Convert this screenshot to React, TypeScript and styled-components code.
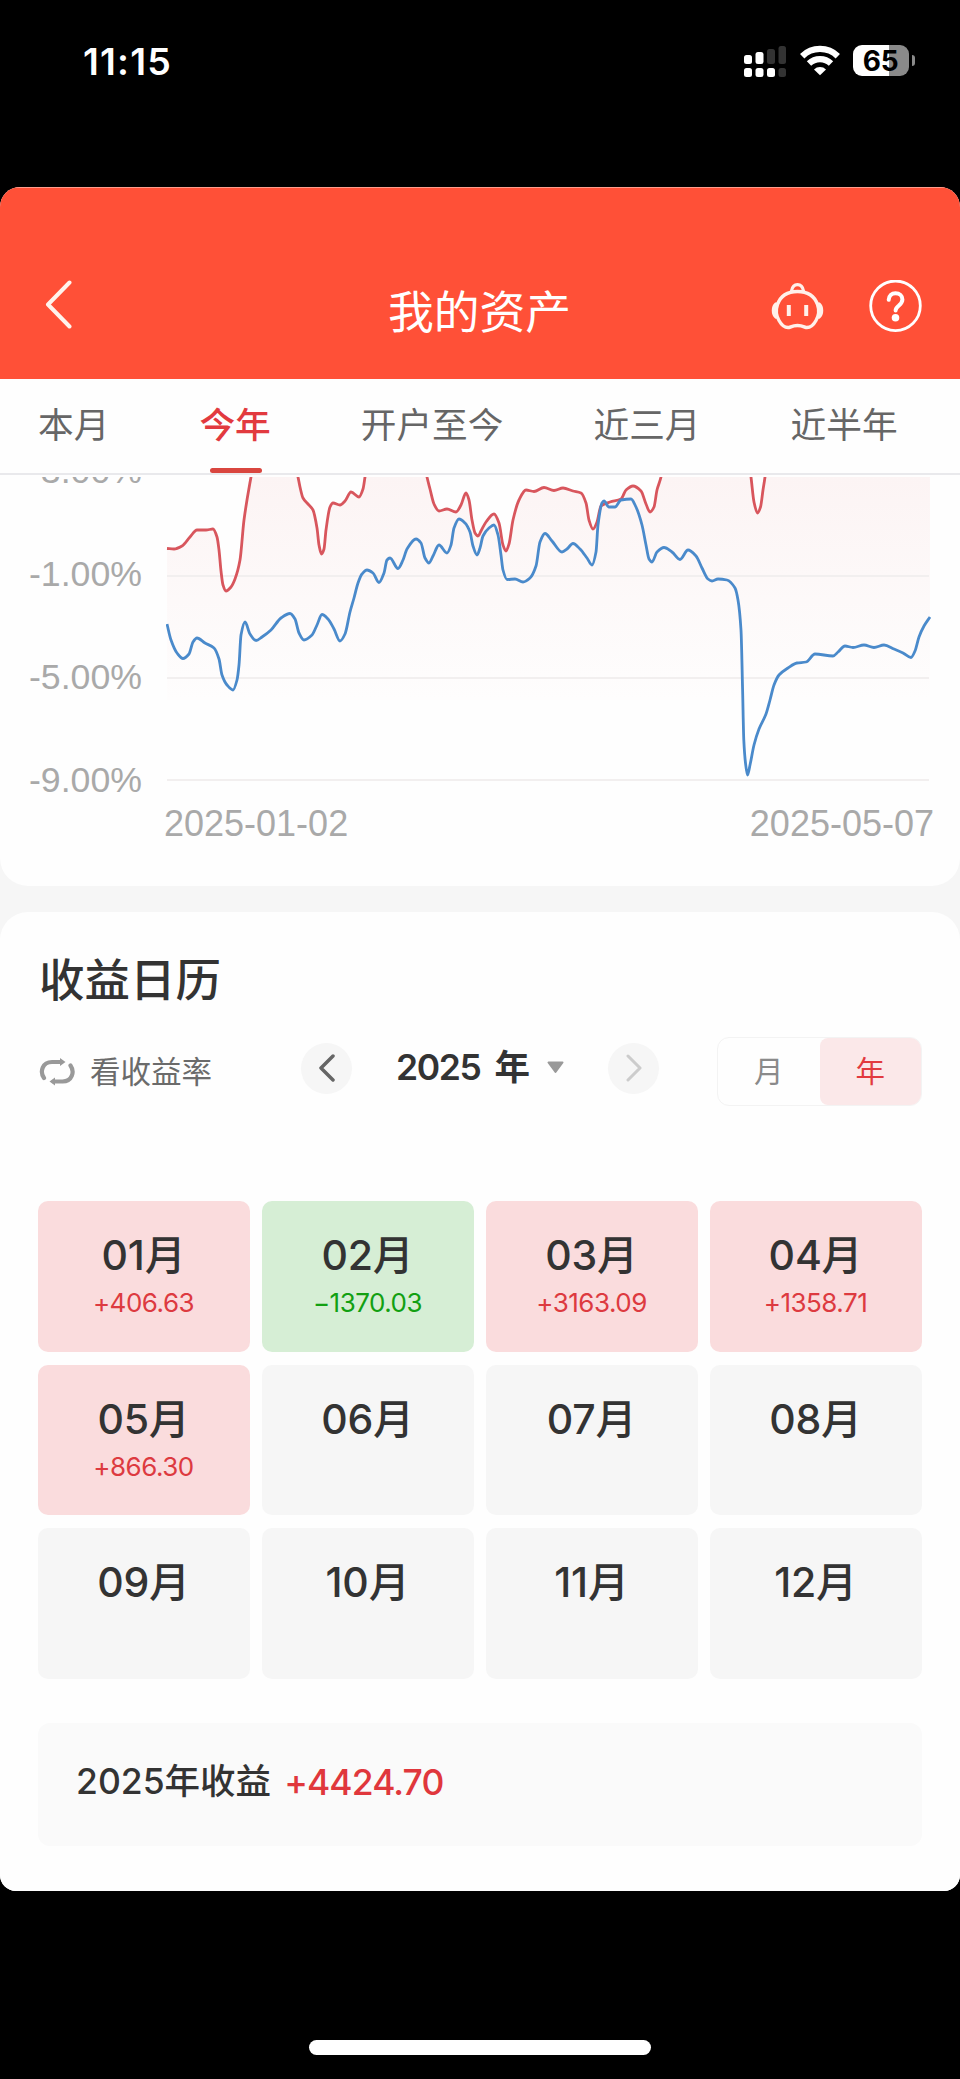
import React from 'react';
import styled, { createGlobalStyle } from 'styled-components';

const GlobalStyle = createGlobalStyle`
  * { box-sizing: border-box; }
  body {
    margin: 0;
    background: #000;
    font-family: Inter, "Noto Sans CJK SC", sans-serif;
    color: #333;
  }
`;

const Screen = styled.div`
  width: 960px;
  height: 2079px;
  display: flex;
  flex-direction: column;
  background: #000;
  overflow: hidden;
`;

const StatusBar = styled.div`
  height: 187px;
  flex: none;
  display: flex;
  justify-content: space-between;
  align-items: flex-start;
  padding: 45px 45px 0 83px;
`;

const Clock = styled.div`
  color: #fff;
  font-size: 37.5px;
  line-height: 33px;
  font-weight: 600;
  letter-spacing: 1.2px;
`;

const StatusIcons = styled.div`
  display: flex;
  align-items: flex-start;
  height: 33px;
`;

const SignalIcon = styled.svg`
  display: block;
  margin-right: 14px;
`;

const WifiIcon = styled.svg`
  display: block;
  margin-right: 13px;
`;

const Battery = styled.div`
  width: 56px;
  height: 31px;
  border-radius: 9px;
  background: linear-gradient(90deg, #fff 0 65%, #8a8a8a 65% 100%);
  color: #000;
  font-size: 28px;
  line-height: 32px;
  font-weight: 700;
  text-align: center;
  letter-spacing: -0.3px;
  padding-right: 1px;
`;

const BatteryTip = styled.div`
  width: 3px;
  height: 11px;
  margin: 10px 0 0 3px;
  border-radius: 0 5px 5px 0;
  background: #8a8a8a;
`;

const AppWindow = styled.div`
  height: 1704px;
  flex: none;
  border-radius: 20px 20px 16px 16px;
  overflow: hidden;
  background: #f6f6f6;
`;

const Header = styled.header`
  height: 192px;
  padding: 92px 38px 0 45px;
  border-top: 1px solid #ff9c8c;
  background: #ff5037;
  display: grid;
  grid-template-columns: 1fr auto 1fr;
  align-items: start;
`;

const Title = styled.h1`
  margin: 10px 8px 0 0;
  font-size: 45.8px;
  line-height: 46px;
  font-weight: 400;
  color: #fff;
`;

const HeaderActions = styled.div`
  display: flex;
  justify-content: flex-end;
  gap: 45px;
`;

const Tabs = styled.nav`
  height: 96px;
  padding-left: 38px;
  display: flex;
  gap: 90px;
  background: #fefefe;
  border-bottom: 2px solid #e9e9ec;
`;

const Tab = styled.div<{ $active?: boolean }>`
  height: 94px;
  display: flex;
  flex-direction: column;
  align-items: center;
  justify-content: space-between;
  padding-top: 23px;
  white-space: nowrap;
  font-size: 35.7px;
  line-height: 46px;
  font-weight: ${(p) => (p.$active ? 500 : 400)};
  color: ${(p) => (p.$active ? '#e23a3f' : '#666')};

  &::after {
    content: '';
    width: 52px;
    height: 5px;
    margin-left: 2px;
    border-radius: 3px;
    background: ${(p) => (p.$active ? '#d9463f' : 'transparent')};
  }
`;

const ChartCard = styled.section`
  height: 411px;
  padding-top: 2px;
  border-radius: 0 0 28px 28px;
  background: #fefefe;
`;

const ChartBody = styled.div`
  display: flex;
  height: 325px;
  overflow: hidden;
  font-family: "Liberation Sans", sans-serif;
`;

const Axis = styled.div`
  width: 142px;
  margin-top: -47px;
  margin-right: 24px;
  flex: none;
`;

const AxisLabel = styled.div`
  height: 103px;
  font-size: 35.7px;
  line-height: 82px;
  text-align: right;
  color: #a9a9a9;
`;

const Plot = styled.svg`
  display: block;
  flex: none;
`;

const Dates = styled.div`
  display: flex;
  justify-content: space-between;
  padding: 0 26px 0 164px;
  font-family: "Liberation Sans", sans-serif;
  font-size: 36px;
  line-height: 44px;
  color: #a9a9a9;
`;

const CalendarCard = styled.section`
  margin-top: 26px;
  height: 979px;
  padding: 38px 38px 0;
  border-radius: 28px 28px 0 0;
  background: #fefefe;
`;

const SectionTitle = styled.h2`
  margin: 0 0 0 1px;
  font-size: 45.5px;
  line-height: 62px;
  font-weight: 500;
  color: #333;
`;

const Controls = styled.div`
  display: flex;
  align-items: center;
  height: 69px;
  margin-top: 25px;
`;

const RateToggle = styled.div`
  width: 263px;
  display: flex;
  align-items: center;
  gap: 14px;
  padding: 1px 0 0 1px;
  font-size: 30.5px;
  line-height: 40px;
  color: #6b6b6b;
`;

const YearPicker = styled.div`
  width: 358px;
  flex: none;
  display: flex;
  align-items: center;
  justify-content: space-between;
  margin-top: -8px;
`;

const RoundButton = styled.div`
  width: 51px;
  height: 51px;
  margin-top: 1px;
  border-radius: 50%;
  background: #f6f6f6;
  display: flex;
  align-items: center;
  justify-content: center;
`;

const YearLabel = styled.div`
  display: flex;
  align-items: center;
  padding-left: 1px;
  font-size: 35.5px;
  line-height: 40px;
  font-weight: 600;
  white-space: nowrap;
  color: #333;

  svg {
    margin-left: 17px;
  }
`;

const YearNumber = styled.span`
  margin-right: 14px;
  letter-spacing: -1.4px;
`;

const Segmented = styled.div`
  width: 205px;
  height: 69px;
  margin-left: auto;
  display: flex;
  border: 1px solid #f3f3f3;
  border-radius: 12px;
  overflow: hidden;
`;

const Segment = styled.div<{ $active?: boolean }>`
  flex: 1;
  border-radius: ${(p) => (p.$active ? '8px 0 0 8px' : '0')};
  background: ${(p) => (p.$active ? '#fbe8e9' : 'transparent')};
  color: ${(p) => (p.$active ? '#e23a3f' : '#8a8a8a')};
  font-size: 29.5px;
  line-height: 67px;
  text-align: center;
`;

const MonthGrid = styled.div`
  margin-top: 95px;
  display: grid;
  grid-template-columns: repeat(4, 1fr);
  grid-auto-rows: 150.5px;
  gap: 13px 12px;
`;

type Tone = 'gain' | 'loss' | 'none';
const cellColor = { gain: '#fadcdd', loss: '#d6eed5', none: '#f6f6f6' };
const amountColor = { gain: '#dd3a40', loss: '#12a012', none: '#333' };

const MonthCell = styled.div<{ $tone: Tone }>`
  border-radius: 10px;
  padding: 28px 1px 0 0;
  background: ${(p) => cellColor[p.$tone]};
  text-align: center;
`;

const MonthName = styled.div`
  font-size: 41px;
  line-height: 52px;
  font-weight: 500;
  letter-spacing: -0.2px;
  color: #333;
`;

const Amount = styled.div<{ $tone: Tone }>`
  font-size: 26px;
  line-height: 44px;
  letter-spacing: -0.5px;
  color: ${(p) => amountColor[p.$tone]};
`;

const Summary = styled.div`
  height: 123px;
  margin-top: 44px;
  padding: 0 38px 4px;
  border-radius: 12px;
  background: #fafafa;
  display: flex;
  align-items: center;
  gap: 13px;
  font-size: 35.5px;
  line-height: 50px;
  font-weight: 500;
`;

const SummaryAmount = styled.span`
  font-family: Inter, sans-serif;
  font-weight: 500;
  letter-spacing: -0.9px;
  padding-top: 1px;
  color: #e0373c;
`;

const HomeArea = styled.div`
  flex: 1;
  display: flex;
  justify-content: center;
  align-items: flex-end;
  padding-bottom: 24px;
`;

const HomeIndicator = styled.div`
  width: 342px;
  height: 15px;
  border-radius: 8px;
  background: #fff;
`;

type Pt = [number, number];

const redLine: Pt[] = [
  [167,548.5],[174,549],[182,546],[190,537],[197,530],[206,530],[213,529],[217,537],[219,550],[221,571],[223,585],[226,591],[231,587],[235,579],[240,560],[244,520],[251,477],
  [258,440],[290,440],
  [298,477],[300,487],[303,498],[308,504],[313,510],[317,528],[319,545],[321.5,554],[324,549],[326,530],[330,507],[333,503],[340,505],[345,501],[351,492],[359,497],[363,489],[365,477],
  [370,440],[420,440],
  [427,477],[430,489],[434,504],[439,511],[447,509],[456,512],[461,505],[466,493],[469,500],[472,520],[475,533],[478,536],[481,531],[486,522],[494,514],[499,523],[503,545],[506,551],[509,544],[513,520],[519,500],[526,490],[534,491.5],[544,487.5],[554,490.5],[563,488],[573,491],[581,493],[586,503],[589,520],[593,529],[597,522],[601,506],[610,502],[621,499],[626,490],[633,486],[641,491],[646,504],[650,512],[654,507],[657,490],[661,477],
  [667,440],[746,440],
  [751,477],[754,502],[757.5,513],[760.5,507],[763,490],[765,477],
  [769,440],[930,440],
];

const blueLine: Pt[] = [
  [167,624],[171,640],[177,653],[183,658.5],[189,654],[193,642],[197,638],[205,643],[214,648],[219,659],[222,675],[227,685],[233,690],[237,680],[239,665],[241,635],[245,622],[250,634],[256,640.5],[262,637],[271,630],[281,618],[290,613.5],[295,619],[299,633],[304,640],[312,635],[317,625],[322,614.5],[328,619],[334,629],[340,641],[345,634],[350,612],[354,598],[358,583],[362,574],[367,570],[373,573],[379,582.5],[384,573],[387,560],[390,558],[398,568.5],[403,560],[407,549],[416,539],[421,543],[425,558],[429,563],[433,556],[439,545],[447,553],[451,545],[454,528],[459,519],[465,523],[470,532],[473,546],[477,555],[480,548],[483,536],[489,528],[494,525],[498,535],[501,555],[503,570],[507,579.5],[515,579],[523,582],[530,578],[536,566],[540,542],[545,533.5],[552,541],[562,552],[567,549],[573,543.5],[580,549],[587,558],[592,565],[596,552],[598,525],[602,503],[604,501],[609,507],[615,507],[621,500],[631,499],[636,507],[642,525],[646,545],[649,559],[652,562],[657,552],[664,547.5],[672,552],[680,559.5],[688,550],[696,556],[702,568],[708,579],[712,581],[718,579],[727,580],[735,588],[738,600],[741,630],[742.6,690],[743.8,740],[745.5,763],[747.5,775],[750,765],[754,745],[759,729],[766,714],[770,700],[774,685],[779,675],[788,668],[797,663],[806,662],[815,654],[833,656],[838,652],[845,646],[853,647.5],[864,645],[874,647.5],[884,645],[894,649],[903,653],[911,657.5],[915,651],[919,637],[924,626],[930,617],
];

/* Monotone cubic interpolation: smooth between the samples, never past a local peak. */
const curve = (pts: Pt[]) => {
  const slope = (i: number) => (pts[i + 1][1] - pts[i][1]) / (pts[i + 1][0] - pts[i][0]);
  const tangent = pts.map((_, i) => {
    if (i === 0) return slope(0);
    if (i === pts.length - 1) return slope(i - 1);
    const a = slope(i - 1);
    const b = slope(i);
    return a * b <= 0 ? 0 : (2 * a * b) / (a + b);
  });
  let d = `M${pts[0][0]} ${pts[0][1]}`;
  for (let i = 1; i < pts.length; i += 1) {
    const [x0, y0] = pts[i - 1];
    const [x1, y1] = pts[i];
    const h = (x1 - x0) / 3;
    d += `C${x0 + h} ${y0 + tangent[i - 1] * h} ${x1 - h} ${y1 - tangent[i] * h} ${x1} ${y1}`;
  }
  return d;
};

const months: { name: string; amount?: string; tone: Tone }[] = [
  { name: '01月', amount: '+406.63', tone: 'gain' },
  { name: '02月', amount: '−1370.03', tone: 'loss' },
  { name: '03月', amount: '+3163.09', tone: 'gain' },
  { name: '04月', amount: '+1358.71', tone: 'gain' },
  { name: '05月', amount: '+866.30', tone: 'gain' },
  { name: '06月', tone: 'none' },
  { name: '07月', tone: 'none' },
  { name: '08月', tone: 'none' },
  { name: '09月', tone: 'none' },
  { name: '10月', tone: 'none' },
  { name: '11月', tone: 'none' },
  { name: '12月', tone: 'none' },
];

const tabs = ['本月', '今年', '开户至今', '近三月', '近半年'];

const Signal = () => (
  <SignalIcon width="42" height="32" viewBox="0 0 42 32">
    <g fill="#fff">
      <rect x="0" y="10" width="8" height="9" rx="2.5" />
      <rect x="11.5" y="7" width="8" height="12" rx="2.5" />
      <rect x="0" y="23" width="8" height="9" rx="2.5" />
      <rect x="11.5" y="23" width="8" height="9" rx="2.5" />
      <rect x="23" y="23" width="8" height="9" rx="2.5" />
    </g>
    <g fill="#333">
      <rect x="23" y="4" width="8" height="15" rx="2.5" />
      <rect x="34.5" y="1" width="7.5" height="18" rx="2.5" />
      <rect x="34.5" y="23" width="7.5" height="9" rx="2.5" />
    </g>
  </SignalIcon>
);

const Wifi = () => (
  <WifiIcon width="40" height="32" viewBox="0 0 40 32">
    <g fill="none" stroke="#fff" strokeWidth="6.2">
      <path d="M2.2 11.2a25.5 25.5 0 0 1 35.6 0" />
      <path d="M9 18.6a15.8 15.8 0 0 1 22 0" />
    </g>
    <path d="M14 24.4a8.8 8.8 0 0 1 12 0l-6 5.8z" fill="#fff" />
  </WifiIcon>
);

const BackIcon = () => (
  <svg width="28" height="50" viewBox="0 0 28 50">
    <path d="M24.5 2.5 3 24.5l21.5 22" fill="none" stroke="#fff3ec" strokeWidth="4" strokeLinecap="round" strokeLinejoin="round" />
  </svg>
);

const RobotIcon = () => (
  <svg width="53" height="52" viewBox="0 0 53 52" fill="none" stroke="#fff0ea" strokeLinecap="round" strokeLinejoin="round">
    <path
      strokeWidth="3.4"
      d="M26.5 11.500C36 11.500 43.500 16 46.500 24.500c1.800 5.200 1.500 11-1.500 16-2.500 4.500-6 7.500-10 7-2-.3-3-2-8.500-2s-6.500 1.700-8.500 2c-4 .5-7.500-2.500-10-7-3-5-3.300-10.800-1.500-16C9.500 16 17 11.500 26.500 11.500z"
    />
    <path strokeWidth="3.2" d="M20.500 11c.7-4 3-6.400 6-6.400s5.300 2.400 6 6.400" />
    <path strokeWidth="3.4" d="M5 24c-3.400 3-3.400 10 0 13M48 24c3.400 3 3.400 10 0 13" />
    <path strokeWidth="4" strokeLinecap="butt" d="M17.800 25v11M35.200 25v11" />
  </svg>
);

const HelpIcon = () => (
  <svg width="53" height="52" viewBox="0 0 53 52" fill="none" stroke="#fff">
    <circle cx="26.5" cy="25.8" r="24.8" strokeWidth="2.800" />
    <path d="M19.700 19.800c.2-4.200 3-6.600 6.800-6.600 4 0 6.900 2.600 6.900 6.300 0 2.900-1.700 4.400-3.500 6-2 1.700-3.300 2.800-3.300 5" strokeWidth="4" strokeLinecap="round" />
    <circle cx="26.500" cy="37.800" r="3.800" fill="#fff" stroke="none" />
  </svg>
);

const SwapIcon = () => (
  <svg width="37" height="30" viewBox="0 0 37 30">
    <g fill="none" stroke="#999" strokeWidth="4.200" strokeLinecap="round">
      <path d="M5 21C.5 14.500 3.500 5 13 5h9" />
      <path d="M31.500 8.500c4.500 6.500 1.500 16-8 16h-9" />
    </g>
    <path d="M21 1v8l5.500-4zM16 20.500v8l-5.500-4z" fill="#999" />
  </svg>
);

const Chart = () => (
  <Plot width="766" height="325" viewBox="166 477 766 325">
    <defs>
      <linearGradient id="area" gradientUnits="userSpaceOnUse" x1="0" y1="477" x2="0" y2="700">
        <stop offset="0" stopColor="#fcf4f4" />
        <stop offset="1" stopColor="#fefdfd" />
      </linearGradient>
    </defs>
    <path d={`${curve(redLine)}V700H167Z`} fill="url(#area)" />
    <path d="M167 576H929M167 678H929M167 780H929" stroke="#f2efef" strokeWidth="2" />
    <path d={curve(redLine)} fill="none" stroke="#d8565d" strokeWidth="2.800" strokeLinejoin="round" />
    <path d={curve(blueLine)} fill="none" stroke="#4a8acb" strokeWidth="2.800" strokeLinejoin="round" />
  </Plot>
);

export default function App() {
  return (
    <Screen>
      <GlobalStyle />
      <StatusBar>
        <Clock>11:15</Clock>
        <StatusIcons>
          <Signal />
          <Wifi />
          <Battery>65</Battery>
          <BatteryTip />
        </StatusIcons>
      </StatusBar>
      <AppWindow>
        <Header>
          <BackIcon />
          <Title>我的资产</Title>
          <HeaderActions>
            <RobotIcon />
            <HelpIcon />
          </HeaderActions>
        </Header>
        <Tabs>
          {tabs.map((t) => (
            <Tab key={t} $active={t === '今年'}>{t}</Tab>
          ))}
        </Tabs>
        <ChartCard>
          <ChartBody>
            <Axis>
              <AxisLabel>3.00%</AxisLabel>
              <AxisLabel>-1.00%</AxisLabel>
              <AxisLabel>-5.00%</AxisLabel>
              <AxisLabel>-9.00%</AxisLabel>
            </Axis>
            <Chart />
          </ChartBody>
          <Dates>
            <span>2025-01-02</span>
            <span>2025-05-07</span>
          </Dates>
        </ChartCard>
        <CalendarCard>
          <SectionTitle>收益日历</SectionTitle>
          <Controls>
            <RateToggle>
              <SwapIcon />
              看收益率
            </RateToggle>
            <YearPicker>
              <RoundButton>
                <svg width="18" height="28" viewBox="0 0 18 28">
                  <path d="M15 2 3 14l12 12" fill="none" stroke="#666" strokeWidth="3.500" strokeLinecap="round" strokeLinejoin="round" />
                </svg>
              </RoundButton>
              <YearLabel>
                <YearNumber>2025</YearNumber>
                年
                <svg width="18" height="13" viewBox="0 0 18 13">
                  <path d="M1.500 1.500h14L8.500 11z" fill="#999" stroke="#999" strokeWidth="2" strokeLinejoin="round" />
                </svg>
              </YearLabel>
              <RoundButton>
                <svg width="18" height="28" viewBox="0 0 18 28">
                  <path d="m3 2 12 12L3 26" fill="none" stroke="#ccc" strokeWidth="3" strokeLinecap="round" strokeLinejoin="round" />
                </svg>
              </RoundButton>
            </YearPicker>
            <Segmented>
              <Segment>月</Segment>
              <Segment $active>年</Segment>
            </Segmented>
          </Controls>
          <MonthGrid>
            {months.map((m) => (
              <MonthCell key={m.name} $tone={m.tone}>
                <MonthName>{m.name}</MonthName>
                {m.amount && <Amount $tone={m.tone}>{m.amount}</Amount>}
              </MonthCell>
            ))}
          </MonthGrid>
          <Summary>
            <span>2025年收益</span>
            <SummaryAmount>+4424.70</SummaryAmount>
          </Summary>
        </CalendarCard>
      </AppWindow>
      <HomeArea>
        <HomeIndicator />
      </HomeArea>
    </Screen>
  );
}
